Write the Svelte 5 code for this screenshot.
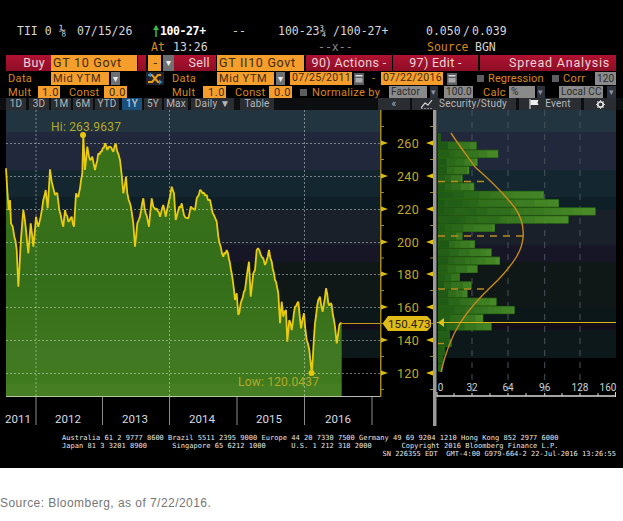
<script>
  // ---------- seeded noise
  let seed = 7;
  const rnd = () => ((seed = (seed * 16807) % 2147483647) / 2147483647);

  // ---------- price line traced from the reference (zoom coordinates converted to page px)
  const a = [[18,175],[22,240],[26,300],[30,270],[33,340],[38,350],[43,380],[50,420],[55,530],[62,400],[70,300],[78,360],[85,430],[92,340],[100,410],[108,320],[115,350],[122,320],[130,270],[137,240],[143,295],[150,178],[155,215],[160,235],[165,255],[172,250],[178,300],[190,350],[195,300],[205,335],[215,320],[222,350],[228,250],[235,260],[240,235],[247,190],[250,78],[255,180],[262,110],[270,150],[277,140],[285,180],[295,130],[305,125],[315,100],[322,120],[330,110],[340,125],[347,100],[360,150],[365,195],[370,250],[378,200],[382,250],[390,280],[400,340],[405,410],[412,340],[420,320],[430,265],[437,310],[447,350],[455,265],[460,290],[470,295],[480,320],[490,285],[497,320],[510,260],[515,230],[522,250],[527,330],[535,300],[545,280],[552,315],[565,325],[572,290],[585,300],[590,265],[600,240],[615,255]].map(([x,y]) => [x/3, 110+y/3]);
  const b = [[12,255],[20,255],[24,270],[30,270],[38,310],[50,335],[55,380],[62,410],[70,440],[80,420],[90,460],[93,480]].map(([x,y]) => [200+x/3, 110+y/3]);
  const c = [[95,40],[105,120],[110,100],[115,165],[125,120],[135,90],[140,50],[147,5],[152,110],[160,40],[165,30],[170,-30],[178,-30],[190,-5],[195,15],[207,-30],[215,5],[225,60],[235,100],[240,190],[245,125],[250,170],[258,150],[262,245],[268,180],[275,210],[285,140],[295,125],[303,205],[312,160],[320,240],[328,270],[335,340],[345,190],[355,120],[360,110],[368,155],[378,85],[385,130],[395,135],[405,200],[410,250],[418,195],[425,190]].map(([x,y]) => [200+x/3, 260+y/3]);
  const raw = [...a, ...b, ...c];
  const pts = [];
  raw.forEach((p, i) => {
    pts.push(p);
    const n = raw[i+1];
    if (n) {
      const steps = Math.floor((n[0]-p[0]) / 1.1);
      for (let s = 1; s < steps; s++) {
        const t = s/steps;
        pts.push([p[0]+(n[0]-p[0])*t, p[1]+(n[1]-p[1])*t + (rnd()-.5)*4.5]);
      }
    }
  });
  const line = pts.map(p => p[0].toFixed(1)+','+p[1].toFixed(1)).join(' ');
  const area = '6,396 ' + line + ' 341.7,396';

  // ---------- chart geometry
  const bands = [[110,132,'#22343f'],[132,170,'#21283c'],[170,197,'#14262f'],[197,210,'#0f1f28'],[210,245,'#1a2029'],[245,262,'#161627'],[262,307,'#0f1717'],[307,323,'#0c1719'],[323,330,'#120d18'],[330,358,'#0d181b'],[358,396,'#000']];
  const ys = [143,176,209,242,274,307,340,373];
  const labels = [260,240,220,200,180,160,140,120];
  const minors = [126.5,159.5,192.5,225.5,258,290.5,323.5,356.5,389.5];
  const years = [['2011',18],['2012',68],['2013',135],['2014',202],['2015',269],['2016',338]];
  const yearTicks = [36,102.5,169.5,237,304.5,372];

  // ---------- histogram rows (right edge of each row)
  const rights = [62,170,235,173,148,128,163,372,417,527,446,225,128,165,215,240,173,120,155,143,230,284,190,215,90,95,75,70,68];
  const hist = [];
  const histBase = [];
  rights.forEach((r, i) => {
    const end = 420 + r/3, y = 133.3 + i*8.22;
    histBase.push({ y, w: end-438 });
    let x = 438.5;
    while (x < end-.8) {
      const w = Math.min(5 + rnd()*8, end - .8 - x);
      const t = (x-438)/(Math.max(end-438,30));
      const j = (rnd()-.5)*7;
      hist.push({ x, y: y+.8, w: w+.4, f: `rgb(${32+t*44+j|0},${92+t*50+j|0},${22+t*20|0})` });
      x += w;
    }
  });
  const curve = 'M451,133 C462,150 472,162 475,167 C490,180 505,195 515,208 C522,218 524,228 523,238 C522,250 515,262 498,280 C488,290 475,300 460,323 C452,336 446,350 441,372';
  const histX = [472,508,544.7,580];
  const histLbl = [['0',440.5],['32',472],['64',508],['96',544.7],['128',580],['160',608]];
  const histMinor = [454,490,526,562,598];

  // ---------- toolbar rows: x = left edge, w = width; spacing is computed from them
  const flow = cells => cells.map((k, i) => ({ ...k, gap: k.x - (i ? cells[i-1].x + cells[i-1].w : 0) }));
  const row3 = flow([
    {x:6,w:45,c:'red end',t:'Buy'},{x:51,w:86,c:'inp big',t:'GT 10 Govt'},{x:138,w:8,c:'red',t:''},
    {x:148,w:13,c:'inp big mid',t:'-'},{x:163,w:11,c:'drop',t:'▾'},{x:174,w:42,c:'red end',t:'Sell'},
    {x:217,w:87,c:'inp big',t:'GT II10 Govt'},{x:306,w:86,c:'red mid',t:'90) Actions -'},{x:393,w:85,c:'red mid',t:'97) Edit -'},
    {x:480,w:136,c:'red end title',t:'Spread Analysis'}]);
  const row4 = flow([
    {x:8,w:43,c:'lab',t:'Data'},{x:51,w:58,c:'inp',t:'Mid YTM'},{x:111,w:9,c:'drop',t:'▾'},{x:146,w:18,c:'swap',t:''},
    {x:172,w:45,c:'lab',t:'Data'},{x:217,w:57,c:'inp',t:'Mid YTM'},{x:276,w:9,c:'drop',t:'▾'},{x:290,w:62,c:'inp date',t:'07/25/2011'},
    {x:354,w:10,c:'cal',t:''},{x:372,w:9,c:'lab',t:'-'},{x:381,w:62,c:'inp date',t:'07/22/2016'},{x:447,w:10,c:'cal',t:''},
    {x:477,w:7,c:'chk',t:''},{x:488,w:62,c:'lab tight',t:'Regression'},{x:552,w:7,c:'chk',t:''},{x:563,w:28,c:'lab',t:'Corr'},{x:595,w:21,c:'gray',t:'120'}]);
  const row5 = flow([
    {x:8,w:30,c:'lab',t:'Mult'},{x:38,w:22,c:'inp right',t:'1.0'},{x:69,w:35,c:'lab',t:'Const'},{x:104,w:23,c:'inp right',t:'0.0'},
    {x:172,w:31,c:'lab',t:'Mult'},{x:203,w:23,c:'inp right',t:'1.0'},{x:235,w:34,c:'lab',t:'Const'},{x:269,w:23,c:'inp right',t:'0.0'},
    {x:300,w:7,c:'chk',t:''},{x:312,w:72,c:'lab',t:'Normalize by'},{x:389,w:38,c:'gray',t:'Factor'},{x:430,w:8,c:'dk',t:'▾'},
    {x:444,w:29,c:'gray',t:'100.0'},{x:483,w:26,c:'lab',t:'Calc'},{x:509,w:26,c:'gray',t:'%'},{x:537,w:8,c:'dk',t:'▾'},
    {x:559,w:44,c:'gray',t:'Local CC'},{x:607,w:9,c:'dk',t:'▾'}]);
  const row6 = flow([
    {x:6,w:20,t:'1D'},{x:29,w:20,t:'3D'},{x:51,w:20,t:'1M'},{x:73,w:20,t:'6M'},{x:95,w:24,t:'YTD'},{x:122,w:20,t:'1Y',c:'on'},
    {x:144,w:18,t:'5Y'},{x:164,w:24,t:'Max'},{x:191,w:43,t:'Daily ▼'},{x:240,w:34,t:'Table'},
    {x:378,w:32,t:'«'},{x:412,w:104,t:'Security/Study',i:'study'},{x:519,w:62,t:'Event',i:'flag'},{x:584,w:32,t:'',i:'gear'}]);
  const r1 = flow([
    {x:17,w:42,t:'TII 0'},{x:59,w:18,t:'⅛',c:'frac'},{x:77,w:60,t:'07/15/26'},{x:152,w:8,t:'',c:'up'},{x:160,w:60,t:'100-27+',c:'bold'},
    {x:232,w:24,t:'--'},{x:278,w:55,t:'100-23¾'},{x:333,w:70,t:'/100-27+'},{x:426,w:37,t:'0.050'},{x:463,w:9,t:'/'},{x:472,w:50,t:'0.039'}]);
  const r2 = flow([
    {x:151,w:22,t:'At',c:'lab'},{x:173,w:60,t:'13:26'},{x:318,w:60,t:'--x--',c:'dim'},{x:427,w:48,t:'Source',c:'lab'},{x:475,w:40,t:'BGN'}]);
</script>

<div class="page">
  <main class="terminal">
    <div class="quote">
      <div class="qrow">
        {#each r1 as k}
          <span class={k.c} style="width:{k.w}px;margin-left:{k.gap}px">{#if k.c === 'up'}<svg width="8" height="14" viewBox="0 0 8 14"><path d="M4 2v11" stroke="#2fc04a" stroke-width="1.500"/><path d="M4 1 1 6h6z" fill="#2fc04a"/></svg>{:else}{k.t}{/if}</span>
        {/each}
      </div>
      <div class="qrow">{#each r2 as k}<span class={k.c} style="width:{k.w}px;margin-left:{k.gap}px">{k.t}</span>{/each}</div>
    </div>

    <div class="bar r3">
      {#each row3 as k}<div class="cell {k.c}" style="width:{k.w}px;margin-left:{k.gap}px">{k.t}</div>{/each}
    </div>
    {#snippet cell(k)}
      <div class="cell {k.c}" style="width:{k.w}px;margin-left:{k.gap}px">
        {#if k.c === 'swap'}
          <svg width="18" height="13" viewBox="0 0 18 13"><rect width="18" height="13" fill="#20242a"/><path d="M2 3h4l6 7h3" fill="none" stroke="#e89a1c" stroke-width="2"/><path d="M2 10h4l6-7h3" fill="none" stroke="#e89a1c" stroke-width="2"/><path d="M5 0.5 1.5 3 5 5.5zM13 7.5 16.5 10 13 12.5z" fill="#2f8fd8"/></svg>
        {:else if k.c === 'cal'}
          <svg width="10" height="12" viewBox="0 0 10 12"><rect width="10" height="12" fill="#5a5d62"/><rect x="1.5" y="2" width="7" height="1.5" fill="#ddd"/><rect x="1.5" y="5" width="7" height="4.5" fill="#aaa"/></svg>
        {:else}{k.t}{/if}
      </div>
    {/snippet}
    <div class="bar r4">{#each row4 as k}{@render cell(k)}{/each}</div>
    <div class="bar r5">{#each row5 as k}{@render cell(k)}{/each}</div>
    <div class="bar r6">
      {#each row6 as k}
        <div class="tab {k.c}" style="width:{k.w}px;margin-left:{k.gap}px">
          {#if k.i === 'study'}
            <svg width="12" height="10" viewBox="0 0 12 10"><path d="M0 9 4 4l3 2 4-5" fill="none" stroke="#ddd" stroke-width="1.2"/><path d="M0 10h12" stroke="#ddd" stroke-dasharray="2 1"/></svg>
          {:else if k.i === 'flag'}
            <svg width="10" height="10" viewBox="0 0 10 10"><path d="M1 0v10" stroke="#eee"/><path d="M1.500 1h8l-1 2.500 1 2.500h-8z" fill="#eee"/></svg>
          {:else if k.i === 'gear'}
            <svg width="9" height="9" viewBox="0 0 10 10"><circle cx="5" cy="5" r="3" fill="none" stroke="#ddd" stroke-width="2"/><path d="M5 0v2M5 8v2M0 5h2M8 5h2M1.500 1.500l1.500 1.500M7 7l1.500 1.500M8.500 1.500 7 3M3 7 1.500 8.500" stroke="#ddd"/></svg>
          {/if}
          {k.t}
        </div>
      {/each}
    </div>

    <svg class="chart" width="623" height="320" viewBox="0 110 623 320">
      <defs>
        <linearGradient id="fill" x1="0" y1="0" x2="0" y2="1">
          <stop offset="0" stop-color="#3a7219"/><stop offset=".55" stop-color="#356e1a"/>
          <stop offset=".72" stop-color="#3a731b"/><stop offset=".84" stop-color="#417824"/>
          <stop offset=".95" stop-color="#3f7a1d"/><stop offset=".955" stop-color="#467f23"/><stop offset="1" stop-color="#467f23"/>
        </linearGradient>
      </defs>

      <!-- background bands -->
      {#each bands as [t, btm, col]}
        <rect x="6" y={t} width="374" height={btm-t} fill={col}/>
        <rect x="437" y={t} width="179" height={btm-t} fill={col}/>
      {/each}

      <!-- price area -->
      <polygon points={area} fill="url(#fill)"/>

      <!-- grid -->
      {#each ys as y}
        <line x1="6" x2="380" y1={y+.5} y2={y+.5} class="grid"/>
      {/each}
      {#each [36,169.5,304.5] as x}
        <line x1={x} x2={x} y1="110" y2="396" class="grid"/>
      {/each}

      <polyline points={line} fill="none" stroke="#e9cc10" stroke-width="1.800" stroke-linejoin="bevel"/>
      <line x1="342" x2="381" y1="323.500" y2="323.500" stroke="#c9961a"/>

      <circle cx="83" cy="135" r="3" fill="#e8c60e"/>
      <circle cx="311.500" cy="373" r="3" fill="#e8c60e"/>
      <text x="51" y="131" class="note">Hi: 263.9637</text>
      <text x="238" y="386" class="note">Low: 120.0437</text>

      <!-- baseline and right axis -->
      <line x1="6" x2="342" y1="396.500" y2="396.500" stroke="#b4c8a0"/>
      <line x1="342" x2="381" y1="396.500" y2="396.500" stroke="#b8b8b8"/>
      <rect x="380" y="110" width="1.500" height="287" fill="#a08a22"/>
      {#each yearTicks as x}
        <line x1={x} x2={x} y1="397" y2="425" stroke="#8d8d8d"/>
      {/each}
      {#each years as [t, x]}
        <text x={x} y="423" class="year" text-anchor="middle">{t}</text>
      {/each}
      {#each ys as y, i}
        <path d="M381 {y-2.500}l7 2.500-7 2.500z" fill="#d9b81a"/>
        <text x="397" y={y+4.500} class="ax">{labels[i]}</text>
        <path d="M426 {y}l7-2.500v5z" fill="#e0bf16"/>
      {/each}
      {#each minors as y}
        <line x1="381" x2="384" y1={y} y2={y} stroke="#9d8720"/>
        <line x1="430" x2="433" y1={y} y2={y} stroke="#9d8720"/>
      {/each}

      <!-- histogram -->
      <rect x="433" y="110" width="3.500" height="316" fill="#9b9b9b"/>
      {#each histX as x}
        <line x1={x} x2={x} y1="110" y2="396" class="hgrid"/>
      {/each}
      {#each histBase as h}
        <rect x="438" y={h.y} width={h.w} height="8.220" fill="#28660f"/>
      {/each}
      {#each hist as h}
        <rect x={h.x} y={h.y} width={h.w} height="6.800" fill={h.f}/>
      {/each}
      <path d={curve} fill="none" stroke="#c88a1e" stroke-width="1.400"/>
      <line x1="438" x2="486" y1="181.500" y2="181.500" class="dash"/>
      <line x1="438" x2="524" y1="236" y2="236" class="dash"/>
      <line x1="438" x2="486" y1="289" y2="289" class="dash"/>
      <line x1="438" x2="444" y1="343.500" y2="343.500" class="dash"/>
      <line x1="437" x2="616" y1="322.500" y2="322.500" stroke="#dcb418" stroke-width="1.200"/>
      <path d="M438 322.500l6-4.500v9z" fill="#e0bf16"/>

      <polygon points="382.500,323.500 388,316 427,316 431,320 431,327 427,331 388,331" fill="#e0bc18"/>
      <text x="388" y="328" class="tag">150.473</text>

      <line x1="437" x2="616" y1="396" y2="396" stroke="#d8d8d8" stroke-width="1.400"/>
      <line x1="437" x2="437" y1="392" y2="397" stroke="#d8d8d8"/>
      <line x1="615.500" x2="615.500" y1="392" y2="397" stroke="#d8d8d8"/>
      {#each [...histX, ...histMinor] as x}
        <line x1={x} x2={x} y1="393" y2="396" stroke="#d8d8d8"/>
      {/each}
      {#each histLbl as [t, x]}
        <text x={x} y="391" class="hl" text-anchor="middle">{t}</text>
      {/each}
    </svg>

    <div class="foot">
      <div>Australia 61 2 9777 8600 Brazil 5511 2395 9000 Europe 44 20 7330 7500 Germany 49 69 9204 1210 Hong Kong 852 2977 6000</div>
      <div>Japan 81 3 3201 8900      Singapore 65 6212 1000      U.S. 1 212 318 2000       Copyright 2016 Bloomberg Finance L.P.</div>
      <div class="rt">SN 226355 EDT  GMT-4:00 G979-664-2 22-Jul-2016 13:26:55</div>
    </div>
  </main>
  <p class="src">Source: Bloomberg, as of 7/22/2016.</p>
</div>

<style>
  :global(body) { margin: 0; background: #fff; }
  .page { width: 623px; height: 521px; overflow: hidden; }
  .terminal { height: 468px; background: #000; display: flex; flex-direction: column; overflow: hidden; }

  .quote { padding-top: 23px; height: 32px; font: 11.5px/16px "DejaVu Sans Mono", monospace; color: #d6d6d6; }
  .qrow { display: flex; height: 16px; }
  .qrow span { flex: none; white-space: pre; }
  .qrow .lab { color: #d98a1a; }
  .qrow .bold { color: #fff; font-weight: 700; letter-spacing: -.4px; }
  .qrow .up { display: flex; align-items: center; }
  .qrow .frac { font-size: 12px; }
  .qrow .dim { color: #888; }

  .bar { display: flex; flex: none; font: 11px/1 "Roboto", sans-serif; letter-spacing: .35px; }
  .r3 { height: 16px; }
  .r4 { height: 13px; margin-top: 1px; }
  .r5 { height: 12px; margin-top: 1px; }
  .r6 { height: 12px; background: #0d0e10; }

  .cell { flex: none; box-sizing: border-box; display: flex; align-items: center; overflow: hidden; white-space: nowrap; }
  .red { background: linear-gradient(#b01231, #8e0e26); color: #ecd4d6; font-size: 12.500px; }
  .end { justify-content: flex-end; padding-right: 6px; }
  .mid { justify-content: center; }
  .title { font-size: 12.500px; letter-spacing: .8px; }
  .inp { background: #f59e2c; color: #3e2a0c; padding-left: 2px; font-size: 11px; letter-spacing: .6px; }
  .date { font-size: 10.500px; letter-spacing: .3px; }
  .big { font-size: 12.500px; letter-spacing: .7px; }
  .right { justify-content: flex-end; padding: 0 1px 0 0; }
  .lab { color: #d98a1a; }
  .tight { letter-spacing: .1px; }
  .drop { background: #6e7074; color: #eee; justify-content: center; font-size: 10px; }
  .dk { background: #2e323c; color: #8c92a0; justify-content: center; font-size: 9px; }
  .gray { background: #8a8a8a; color: #2b2b2b; padding-left: 2px; font-size: 10px; letter-spacing: .1px; }
  .chk { background: #5d5d5f; height: 7px; align-self: center; }

  .tab { flex: none; box-sizing: border-box; height: 12px; background: #2a2d31; color: #b3b8bc; font-size: 10px; letter-spacing: .2px; display: flex; align-items: center; justify-content: center; gap: 6px; white-space: nowrap; }
  .tab.on { background: #1d4f78; color: #d5dee6; }

  .chart { display: block; flex: none; }
  .grid { stroke: #fff; stroke-opacity: .42; stroke-dasharray: 2 2; }
  .hgrid { stroke: #48545a; stroke-dasharray: 6 6; }
  .dash { stroke: #bb8c20; stroke-width: 1.400; stroke-dasharray: 7 6; }
  .note { font: 12px "Roboto", sans-serif; fill: #b4a828; letter-spacing: .2px; }
  .ax { font: 12.500px "Roboto", sans-serif; fill: #c2aa24; letter-spacing: .3px; }
  .tag { font: 11.500px "Roboto", sans-serif; fill: #2a2204; letter-spacing: .1px; }
  .year { font: 11.500px "Roboto", sans-serif; fill: #d8dde0; }
  .hl { font: 10px "Roboto", sans-serif; fill: #c8d2d8; }

  .foot { margin-top: 4px; padding-left: 62px; width: 554px; font: 7px/8px "DejaVu Sans Mono", monospace; color: #e6e6e6; letter-spacing: .03px; }
  .foot div { white-space: pre; }
  .rt { text-align: right; }
  .src { margin: 27px 0 0; font: 12px/16px "Liberation Sans", Arial, sans-serif; color: #767676; letter-spacing: .45px; }
</style>
